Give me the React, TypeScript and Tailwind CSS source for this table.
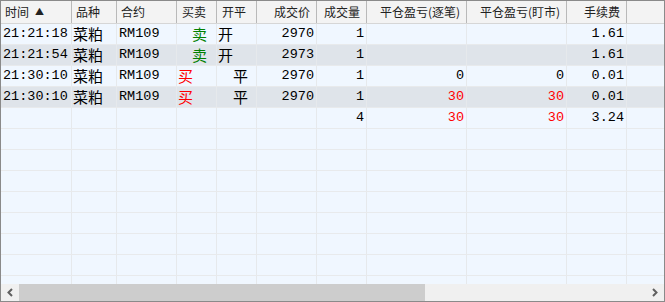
import React from "react";

type Col = { key: string; title: string; w: number; align: "left" | "right" };

const cols: Col[] = [
  { key: "time", title: "时间 ▲", w: 71, align: "left" },
  { key: "kind", title: "品种", w: 45, align: "left" },
  { key: "code", title: "合约", w: 60, align: "left" },
  { key: "side", title: "买卖", w: 40, align: "left" },
  { key: "oc", title: "开平", w: 40, align: "left" },
  { key: "price", title: "成交价", w: 60, align: "right" },
  { key: "vol", title: "成交量", w: 50, align: "right" },
  { key: "pl1", title: "平仓盈亏(逐笔)", w: 100, align: "right" },
  { key: "pl2", title: "平仓盈亏(盯市)", w: 100, align: "right" },
  { key: "fee", title: "手续费", w: 60, align: "right" },
];

type Row = {
  time?: string;
  kind?: string;
  code?: string;
  side?: "买" | "卖";
  oc?: "开" | "平";
  price?: string;
  vol?: string;
  pl1?: string;
  pl2?: string;
  fee?: string;
};

const rows: Row[] = [
  { time: "21:21:18", kind: "菜粕", code: "RM109", side: "卖", oc: "开", price: "2970", vol: "1", fee: "1.61" },
  { time: "21:21:54", kind: "菜粕", code: "RM109", side: "卖", oc: "开", price: "2973", vol: "1", fee: "1.61" },
  { time: "21:30:10", kind: "菜粕", code: "RM109", side: "买", oc: "平", price: "2970", vol: "1", pl1: "0", pl2: "0", fee: "0.01" },
  { time: "21:30:10", kind: "菜粕", code: "RM109", side: "买", oc: "平", price: "2970", vol: "1", pl1: "30", pl2: "30", fee: "0.01" },
  { vol: "4", pl1: "30", pl2: "30", fee: "3.24" },
];

const mono = { fontFamily: '"Liberation Mono", "DejaVu Sans Mono", monospace' };
const cjk = { fontFamily: '"Noto Sans CJK SC", sans-serif' };

function Cell({ col, row }: { col: Col; row?: Row }) {
  const base = "h-full shrink-0 border-r border-[#e6e9ec] flex items-center overflow-hidden whitespace-nowrap";
  if (!row) return <div className={base} style={{ width: col.w }} />;
  const v = row[col.key as keyof Row];

  if (col.key === "kind") {
    return (
      <div className={`${base} pl-[1px] text-[15px] text-black`} style={{ width: col.w, ...cjk }}>
        {v}
      </div>
    );
  }
  if (col.key === "side") {
    const sell = v === "卖";
    return (
      <div
        className={`${base} text-[15px] ${sell ? "justify-end pr-[9px] text-[#008000]" : "pl-[1px] text-[#ff0000]"}`}
        style={{ width: col.w, ...cjk }}
      >
        {v}
      </div>
    );
  }
  if (col.key === "oc") {
    const close = v === "平";
    return (
      <div
        className={`${base} text-[15px] text-black ${close ? "justify-end pr-[8px]" : "pl-[1px]"}`}
        style={{ width: col.w, ...cjk }}
      >
        {v}
      </div>
    );
  }
  const red = (col.key === "pl1" || col.key === "pl2") && v && v !== "0";
  return (
    <div
      className={`${base} text-[13.5px] ${red ? "text-[#ff0000]" : "text-black"} ${
        col.align === "right" ? "justify-end pr-[2px]" : "pl-[2px]"
      }`}
      style={{ width: col.w, ...mono }}
    >
      {v}
    </div>
  );
}

export default function App() {
  const filler = Array.from({ length: 8 });
  return (
    <div className="w-[665px] h-[302px] bg-white">
      <div className="w-full h-full border border-[#8a8a8a] flex flex-col overflow-hidden bg-[#f0f7ff]">
        {/* 表头 */}
        <div className="h-[23px] shrink-0 flex bg-[#f3f3f3] border-b border-[#d6d6d6]" style={cjk}>
          {cols.map((c) => (
            <div
              key={c.key}
              className={`h-full shrink-0 flex items-center border-r border-[#b9b9b9] text-[12px] text-[#222] ${
                c.align === "right" ? "justify-end pr-[6px]" : "pl-[4px]"
              } ${c.key === "side" || c.key === "oc" ? "pl-[5px]" : ""}`}
              style={{ width: c.w }}
            >
              {c.key === "time" ? (
                <span className="flex items-center gap-[6px]">
                  时间<span className="text-[9px]">▲</span>
                </span>
              ) : (
                c.title
              )}
            </div>
          ))}
          <div className="h-full flex-1" />
        </div>

        {/* 数据 */}
        <div className="flex-1 overflow-hidden">
          {rows.map((r, i) => (
            <div
              key={i}
              className={`h-[21px] flex border-b border-[#e8eaec] ${i % 2 === 1 && i < 4 ? "bg-[#dfe4ea]" : "bg-[#f0f7ff]"}`}
            >
              {cols.map((c) => (
                <Cell key={c.key} col={c} row={r} />
              ))}
              <div className="h-full flex-1" />
            </div>
          ))}
          {filler.map((_, i) => (
            <div key={"f" + i} className="h-[21px] flex border-b border-[#e8eaec]">
              {cols.map((c) => (
                <Cell key={c.key} col={c} />
              ))}
              <div className="h-full flex-1" />
            </div>
          ))}
        </div>

        {/* 滚动条 */}
        <div className="h-[17px] shrink-0 flex bg-[#f0f0f0]">
          <div className="w-[18px] h-full flex items-center justify-center">
            <svg width="8" height="9" viewBox="0 0 8 9">
              <path d="M6 1 L2.5 4.5 L6 8" stroke="#606060" strokeWidth="2" fill="none" />
            </svg>
          </div>
          <div className="w-[406px] h-full bg-[#cdcdcd]" />
          <div className="flex-1" />
          <div className="w-[18px] h-full flex items-center justify-center">
            <svg width="8" height="9" viewBox="0 0 8 9">
              <path d="M2 1 L5.5 4.5 L2 8" stroke="#606060" strokeWidth="2" fill="none" />
            </svg>
          </div>
        </div>
      </div>
    </div>
  );
}
